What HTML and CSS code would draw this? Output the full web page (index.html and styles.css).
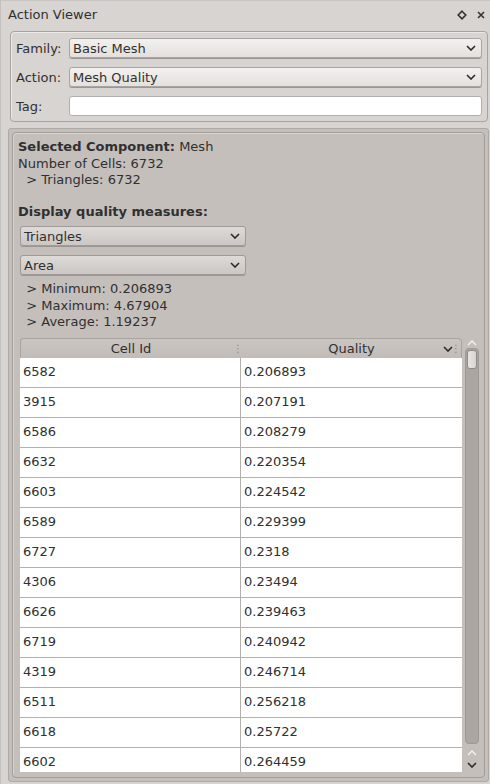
FILE: index.html
```html
<!DOCTYPE html>
<html>
<head>
<meta charset="utf-8">
<link rel="stylesheet" href="styles.css">
</head>
<body>
<div class="app">
  <div class="titlebar">
    <span class="title">Action Viewer</span>
    <span class="tb-icons">
      <svg width="10" height="10" viewBox="0 0 10 10"><path d="M5 1.2 L8.8 5 L5 8.8 L1.2 5 Z" fill="none" stroke="#333" stroke-width="1.6"/></svg>
      <svg width="10" height="10" viewBox="0 0 10 10"><path d="M2 2 L8 8 M8 2 L2 8" stroke="#333" stroke-width="1.6"/></svg>
    </span>
  </div>
  <div class="group">
    <div class="frow">
      <span class="flabel">Family:</span>
      <div class="combo light"><span>Basic Mesh</span><svg class="chev" width="10" height="6" viewBox="0 0 10 6"><path d="M1 1 L5 5 L9 1" fill="none" stroke="#2a2a2a" stroke-width="1.6"/></svg></div>
    </div>
    <div class="frow">
      <span class="flabel">Action:</span>
      <div class="combo light"><span>Mesh Quality</span><svg class="chev" width="10" height="6" viewBox="0 0 10 6"><path d="M1 1 L5 5 L9 1" fill="none" stroke="#2a2a2a" stroke-width="1.6"/></svg></div>
    </div>
    <div class="frow">
      <span class="flabel">Tag:</span>
      <div class="lineedit"></div>
    </div>
  </div>
  <div class="scroll-outer">
    <div class="scroll-inner">
      <div class="line"><b>Selected Component:</b> Mesh</div>
      <div class="line">Number of Cells: 6732</div>
      <div class="line">&nbsp;&nbsp;&gt; Triangles: 6732</div>
      <div class="line heading"><b>Display quality measures:</b></div>
      <div class="combo dark c1"><span>Triangles</span><svg class="chev" width="10" height="6" viewBox="0 0 10 6"><path d="M1 1 L5 5 L9 1" fill="none" stroke="#2a2a2a" stroke-width="1.6"/></svg></div>
      <div class="combo dark c2"><span>Area</span><svg class="chev" width="10" height="6" viewBox="0 0 10 6"><path d="M1 1 L5 5 L9 1" fill="none" stroke="#2a2a2a" stroke-width="1.6"/></svg></div>
      <div class="stats">
        <div class="line">&nbsp;&nbsp;&gt; Minimum: 0.206893</div>
        <div class="line">&nbsp;&nbsp;&gt; Maximum: 4.67904</div>
        <div class="line">&nbsp;&nbsp;&gt; Average: 1.19237</div>
      </div>
      <div class="tablewrap">
        <div class="table">
          <div class="thead">
            <div class="th">Cell Id<span class="grip">⋮</span></div>
            <div class="th">Quality<svg class="sortchev" width="10" height="6" viewBox="0 0 10 6"><path d="M1 1 L5 5 L9 1" fill="none" stroke="#2a2a2a" stroke-width="1.6"/></svg><span class="grip last">⋮</span></div>
          </div>
          <div class="tbody">
            <div class="tr"><div class="td">6582</div><div class="td">0.206893</div></div>
            <div class="tr"><div class="td">3915</div><div class="td">0.207191</div></div>
            <div class="tr"><div class="td">6586</div><div class="td">0.208279</div></div>
            <div class="tr"><div class="td">6632</div><div class="td">0.220354</div></div>
            <div class="tr"><div class="td">6603</div><div class="td">0.224542</div></div>
            <div class="tr"><div class="td">6589</div><div class="td">0.229399</div></div>
            <div class="tr"><div class="td">6727</div><div class="td">0.2318</div></div>
            <div class="tr"><div class="td">4306</div><div class="td">0.23494</div></div>
            <div class="tr"><div class="td">6626</div><div class="td">0.239463</div></div>
            <div class="tr"><div class="td">6719</div><div class="td">0.240942</div></div>
            <div class="tr"><div class="td">4319</div><div class="td">0.246714</div></div>
            <div class="tr"><div class="td">6511</div><div class="td">0.256218</div></div>
            <div class="tr"><div class="td">6618</div><div class="td">0.25722</div></div>
            <div class="tr"><div class="td">6602</div><div class="td">0.264459</div></div>
          </div>
        </div>
        <div class="vscroll">
          <svg class="sb-up" width="10" height="6" viewBox="0 0 10 6"><path d="M1 5 L5 1 L9 5" fill="none" stroke="#f4f2f0" stroke-width="1.4"/></svg>
          <div class="track"><div class="handle"></div></div>
          <svg class="sb-arrow" width="10" height="6" viewBox="0 0 10 6"><path d="M1 5 L5 1 L9 5" fill="none" stroke="#f4f2f0" stroke-width="1.4"/></svg>
          <svg class="sb-arrow" width="10" height="6" viewBox="0 0 10 6"><path d="M1 1 L5 5 L9 1" fill="none" stroke="#2a2a2a" stroke-width="1.6"/></svg>
        </div>
      </div>
    </div>
  </div>
</div>
</body>
</html>
```
FILE: styles.css
```css
* { box-sizing: border-box; }
html, body { margin: 0; padding: 0; }
body {
  width: 490px;
  height: 784px;
  overflow: hidden;
  background: #d8d4d1;
  font-family: "DejaVu Sans", sans-serif;
  font-size: 13px;
  color: #303030;
}
.app {
  width: 490px;
  height: 784px;
  display: flex;
  flex-direction: column;
  border-left: 1px solid #c4c0bd;
}
.titlebar {
  height: 30px;
  display: flex;
  align-items: flex-start;
  justify-content: space-between;
  padding: 6px 4px 0 7px;
  border-top: 1px solid #c8c4c1;
}
.title { line-height: 16px; }
.tb-icons {
  display: flex;
  gap: 9px;
  padding-top: 3px;
}
.group {
  margin: 1px 2px 0 9px;
  height: 91px;
  border: 1px solid #a7a3a0;
  border-radius: 4px;
  box-shadow: inset 1px 1px 0 #ebe8e6;
  padding: 6px 5px 0 5px;
  display: flex;
  flex-direction: column;
  gap: 9px;
}
.frow {
  display: flex;
  align-items: center;
  height: 20px;
}
.flabel {
  width: 53px;
  flex: none;
}
.combo {
  height: 20px;
  border: 1px solid #a9a5a2;
  border-radius: 3px;
  display: flex;
  align-items: center;
  justify-content: space-between;
  padding: 0 5px 0 3px;
  box-shadow: 0 1px 0 #9a9694;
}
.combo.light {
  flex: 1;
  background: linear-gradient(#f3f1ef, #e3e0dd);
}
.combo.dark {
  width: 226px;
  margin-left: 2px;
  background: linear-gradient(#dedad7, #ccc7c4);
  border-color: #9f9a97;
}
.lineedit {
  flex: 1;
  height: 20px;
  background: #fff;
  border: 1px solid #b2aeab;
  border-radius: 3px;
}
.scroll-outer {
  margin: 6px 1px 2px 7px;
  flex: 1;
  border: 1px solid #b0aaa7;
  border-radius: 3px;
  background: #c5bfbc;
  padding: 3px;
}
.scroll-inner {
  height: 100%;
  border: 1px solid #a49e9b;
  border-radius: 4px;
  box-shadow: inset 1px 1px 0 #d9d4d1;
  padding: 6px 5px 0 5px;
  display: flex;
  flex-direction: column;
}
.line {
  line-height: 16.5px;
  white-space: pre;
}
.line b { font-weight: bold; }
.heading { margin-top: 15px; }
.c1 { margin-top: 6px; }
.c2 { margin-top: 9px; }
.stats { margin-top: 6px; }
.tablewrap {
  margin: 7px 0 0 2px;
  display: flex;
  height: 434px;
}
.table {
  width: 442px;
  display: flex;
  flex-direction: column;
  overflow: hidden;
}
.thead {
  display: flex;
  height: 20px;
  flex: none;
  border: 1px solid #aaa4a1;
  border-bottom: none;
  border-radius: 4px 4px 0 0;
  background: linear-gradient(#cbc5c2, #c2bcb9);
}
.th {
  position: relative;
  width: 221px;
  flex: none;
  display: flex;
  align-items: center;
  justify-content: center;
  line-height: 19px;
}
.th:first-child { width: 220px; }
.grip {
  position: absolute;
  right: -2px;
  top: 2px;
  font-size: 10px;
  color: #8d8784;
  line-height: 16px;
}
.grip.last { right: 1px; }
.sortchev {
  position: absolute;
  right: 9px;
  top: 7px;
}
.tbody {
  flex: 1;
  background: #fff;
  overflow: hidden;
}
.tr {
  display: flex;
  height: 30px;
  border-bottom: 1px solid #b4b0ad;
}
.td {
  padding: 0 0 0 3px;
  line-height: 28px;
  flex: none;
}
.td:first-child {
  width: 221px;
  border-right: 1px solid #b4b0ad;
}
.td:last-child { flex: 1; }
.vscroll {
  width: 17px;
  display: flex;
  flex-direction: column;
  align-items: center;
  padding-left: 2px;
}
.sb-up { margin: 2px 0 2px; }
.track {
  flex: 1;
  width: 14px;
  background: #aca6a3;
  border: 1px solid #9f9996;
  border-radius: 4px;
  padding: 1px;
}
.handle {
  height: 19px;
  background: linear-gradient(90deg, #e8e5e3, #d8d4d1);
  border: 1px solid #8f8a87;
  border-radius: 3px;
}
.sb-arrow { margin-top: 6px; }
.sb-arrow:last-child { margin-bottom: 4px; }
```
